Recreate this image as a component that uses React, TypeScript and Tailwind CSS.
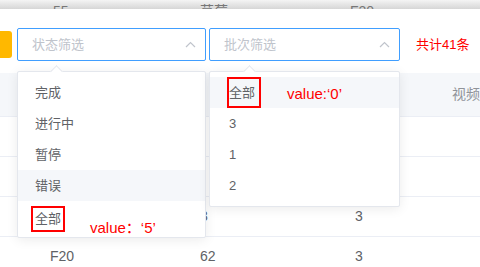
const statusOptions = ['完成', '进行中', '暂停', '错误', '全部'];
const batchOptions = ['全部', '3', '1', '2'];

const rows = [
  ['', '', '', ''],
  ['', '', '', ''],
  ['', '3', '3', ''],
  ['F20', '62', '3', ''],
];

const ChevronUp = () => (
  <svg width="11" height="7" viewBox="0 0 11 7" fill="none">
    <path d="M1 6L5.5 1.5L10 6" stroke="#c0c4cc" strokeWidth="1.2" />
  </svg>
);

const Caret = ({ left }: { left: number }) => (
  <div
    className="absolute -top-[5px] w-[9px] h-[9px] rotate-45 bg-white border-l border-t border-[#e4e7ed]"
    style={{ left }}
  />
);

const App = () => {
  return (
    <div
      className="relative w-[480px] h-[267px] overflow-hidden bg-white"
      style={{ fontFamily: '"Liberation Sans", "Noto Sans CJK SC", sans-serif' }}
    >
      {/* cut-off header above the filter bar */}
      <div className="h-[9px] overflow-hidden bg-gradient-to-b from-[#f4f4f4] to-[#d6d6d6] text-[14px] text-[#777] leading-[16px]">
        <div className="flex pt-[3px]">
          <span className="w-[150px] pl-[53px]">55</span>
          <span className="w-[150px] pl-[50px]">草莓</span>
          <span className="pl-[50px]">F20</span>
        </div>
      </div>

      {/* filter bar */}
      <div className="h-[64px] flex items-start pt-[19px]">
        <div className="w-[12px] h-[27px] mt-[3px] bg-[#ffb800] rounded-r-[3px]" />
        <div className="ml-[5px] w-[189px] h-[33px] border border-[#409eff] rounded-[2px] flex items-center justify-between pl-[14px] pr-[9px] text-[13px] text-[#c0c4cc]">
          <span>状态筛选</span>
          <ChevronUp />
        </div>
        <div className="ml-[3px] w-[191px] h-[33px] border border-[#409eff] rounded-[2px] flex items-center justify-between pl-[14px] pr-[9px] text-[13px] text-[#c0c4cc]">
          <span>批次筛选</span>
          <ChevronUp />
        </div>
        <span className="ml-[16px] h-[33px] flex items-center text-[13px] text-[#ff0000]">共计41条</span>
      </div>

      {/* table behind the dropdowns */}
      <div className="text-[14px] text-[#606266]">
        <div className="flex h-[44px] items-center bg-[#f5f7fa] border-b border-[#ebeef5]">
          <span className="w-[150px]" />
          <span className="w-[155px]" />
          <span className="w-[150px]" />
          <span className="pl-[7px] whitespace-nowrap text-[#909399]">视频</span>
        </div>
        {rows.map((row, i) => (
          <div key={i} className="flex h-[40px] items-center border-b border-[#ebeef5]">
            <span className="w-[150px] pl-[50px]">{row[0]}</span>
            <span className="w-[155px] pl-[50px]">{row[1]}</span>
            <span className="w-[150px] pl-[50px]">{row[2]}</span>
            <span className="pl-[7px]">{row[3]}</span>
          </div>
        ))}
      </div>

      {/* status dropdown */}
      <div className="absolute left-[17px] top-[71px] w-[189px] bg-white border border-[#e4e7ed] rounded-[2px] shadow-[0_2px_12px_rgba(0,0,0,0.08)] py-[5px]">
        <Caret left={34} />
        {statusOptions.map((opt) => (
          <div
            key={opt}
            className={`relative h-[31px] flex items-center pl-[17px] text-[13px] text-[#606266] ${opt === '错误' ? 'bg-[#f5f7fa]' : ''}`}
          >
            {opt === '全部' ? (
              <span className="-ml-[4px] mt-[4px] border-2 border-[#ff0000] px-[2px] h-[26px] flex items-center">全部</span>
            ) : (
              opt
            )}
          </div>
        ))}
      </div>

      {/* batch dropdown */}
      <div className="absolute left-[209px] top-[71px] w-[191px] bg-white border border-[#e4e7ed] rounded-[2px] shadow-[0_2px_12px_rgba(0,0,0,0.08)] py-[5px]">
        <Caret left={35} />
        {batchOptions.map((opt) => (
          <div
            key={opt}
            className={`relative h-[31px] flex items-center pl-[19px] text-[13px] text-[#606266] ${opt === '全部' ? 'bg-[#f5f7fa]' : ''}`}
          >
            {opt === '全部' ? (
              <span className="-ml-[2px] border-2 border-[#ff0000] pr-[4px] h-[31px] flex items-center">全部</span>
            ) : (
              opt
            )}
          </div>
        ))}
      </div>

      {/* annotations */}
      <span className="absolute left-[287px] top-[83px] text-[15px] text-[#ff0000] whitespace-nowrap">value:‘0’</span>
      <span className="absolute left-[90px] top-[217px] text-[15px] text-[#ff0000] whitespace-nowrap">value：‘5’</span>
    </div>
  );
};

export default App;
